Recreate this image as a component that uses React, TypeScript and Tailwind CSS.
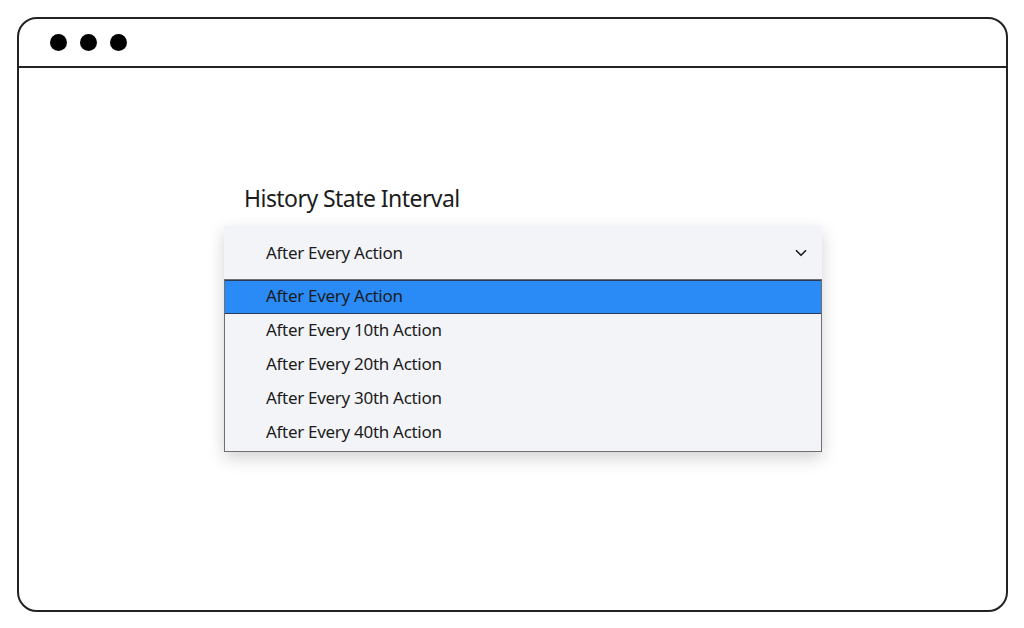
import { ChevronDown } from 'lucide-react'

const options = [
  'After Every Action',
  'After Every 10th Action',
  'After Every 20th Action',
  'After Every 30th Action',
  'After Every 40th Action',
]

export default function App() {
  return (
    <div className="h-[628px] w-[1024px] bg-white pl-[17px] pt-[17px] font-['Noto_Sans',sans-serif] text-[#1c1c1c]">
      <div className="flex h-[595px] w-[991px] flex-col rounded-[20px] border-2 border-[#222]">
        <div className="flex h-[49px] items-center gap-[13px] border-b-2 border-[#222] pl-[31px]">
          <span className="h-[17px] w-[17px] rounded-full bg-black" />
          <span className="h-[17px] w-[17px] rounded-full bg-black" />
          <span className="h-[17px] w-[17px] rounded-full bg-black" />
        </div>
        <div className="pl-[205px] pt-[114px]">
          <div className="pl-[20px] text-[23px] leading-[32px] tracking-[-0.55px]">History State Interval</div>
          <div className="mt-[12px] w-[598px] shadow-[0_6px_16px_rgba(0,0,0,0.18)]">
            <div className="flex h-[53px] items-center justify-between bg-[#f3f4f8] pl-[42px] pr-[12px] pt-[1px] text-[17px] tracking-[-0.3px]">
              <span>After Every Action</span>
              <ChevronDown className="h-[18px] w-[18px]" strokeWidth={2.2} />
            </div>
            <div className="border border-[#6f6f72] bg-[#f3f4f8] pb-[1px]">
              {options.map((o, i) => (
                <div
                  key={o}
                  className={`flex h-[34px] items-center pb-[3px] pl-[41px] text-[17px] tracking-[-0.3px] ${
                    i === 0 ? 'border-y border-[#2b3a55] bg-[#2a8af6]' : ''
                  }`}
                >
                  {o}
                </div>
              ))}
            </div>
          </div>
        </div>
      </div>
    </div>
  )
}
